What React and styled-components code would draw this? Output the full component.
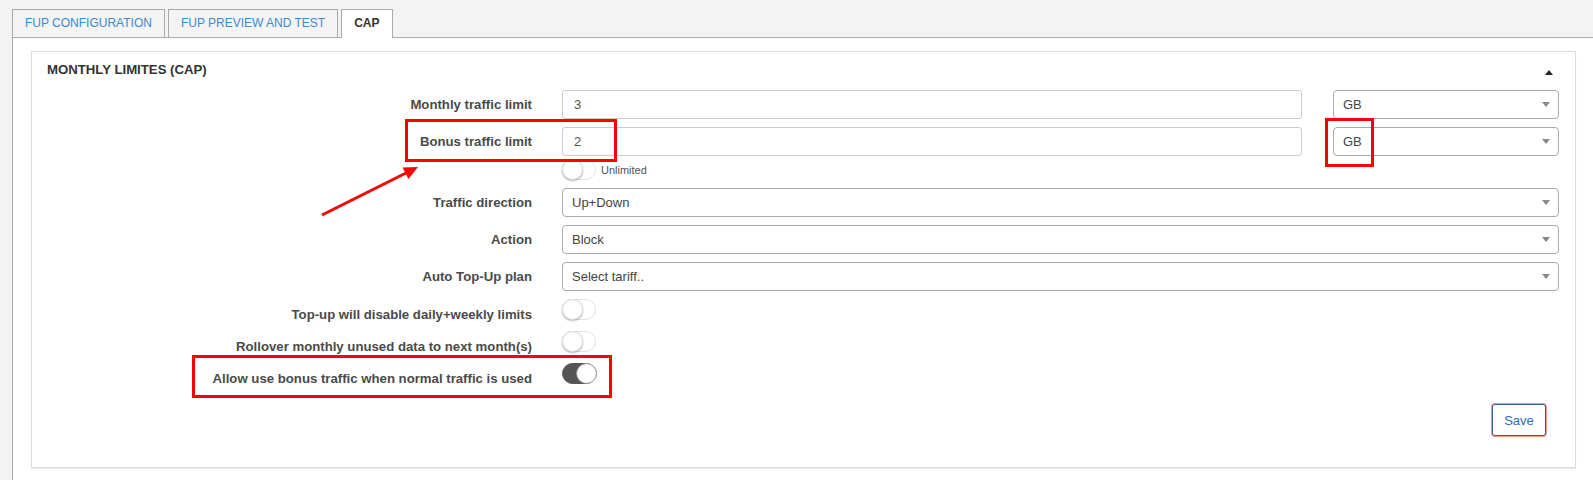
import React from 'react';
import styled, { createGlobalStyle } from 'styled-components';

const Global = createGlobalStyle`
  html, body { margin: 0; padding: 0; background: #f3f3f3; }
  body { font-family: "Liberation Sans", Arial, sans-serif; }
  * { box-sizing: border-box; }
`;

const Page = styled.div`
  position: relative;
  width: 1593px;
  height: 480px;
  overflow: hidden;
  background: #f3f3f3;
`;

const TabBar = styled.div`
  display: flex;
  align-items: flex-end;
  gap: 3px;
  padding: 9px 0 0 12px;
`;

const Tab = styled.div`
  position: relative;
  z-index: 1;
  height: ${p => (p.$active ? '29px' : '28px')};
  margin-bottom: ${p => (p.$active ? '-1px' : '0')};
  padding: 0 12px;
  border: 1px solid #aaa;
  border-bottom: none;
  background: ${p => (p.$active ? '#fff' : '#f4f4f4')};
  color: ${p => (p.$active ? '#333' : '#3b8ad0')};
  font-weight: ${p => (p.$active ? 'bold' : 'normal')};
  font-size: 12px;
  line-height: 27px;
  white-space: nowrap;
`;

const Panel = styled.div`
  margin-left: 12px;
  border-top: 1px solid #aaa;
  border-left: 1px solid #aaa;
  background: #fff;
  padding: 13px 17px 12px 18px;
`;

const Card = styled.div`
  border: 1px solid #ddd;
  box-shadow: 0 1px 1px rgba(0, 0, 0, 0.08);
  background: #fff;
  padding-bottom: 31px;
`;

const CardHeader = styled.div`
  display: flex;
  justify-content: space-between;
  align-items: center;
  padding: 8px 22px 0 15px;
  height: 28px;
`;

const CardTitle = styled.div`
  font-size: 13.2px;
  font-weight: bold;
  color: #333;
  line-height: 20px;
`;

const CollapseCaret = styled.span`
  width: 0;
  height: 0;
  border-left: 4px solid transparent;
  border-right: 4px solid transparent;
  border-bottom: 5px solid #222;
  margin-top: 4px;
`;

const Form = styled.div`
  margin-top: 10px;
`;

const Row = styled.div`
  display: flex;
  gap: 30px;
  margin-bottom: ${p => p.$mb || '8px'};
  height: ${p => p.$h || 'auto'};
`;

const Label = styled.div`
  width: 500px;
  flex-shrink: 0;
  text-align: right;
  font-size: 13.2px;
  font-weight: bold;
  color: #4a4a4a;
  line-height: ${p => (p.$toggle ? '17px' : '29px')};
  padding-top: ${p => (p.$toggle ? '7px' : '0')};
  white-space: nowrap;
`;

const Field = styled.div`
  width: 997px;
  display: flex;
  flex-direction: column;
`;

const FieldLine = styled.div`
  display: flex;
  gap: 31px;
`;

const TextInput = styled.input`
  width: ${p => p.$w || '100%'};
  height: 29px;
  border: 1px solid #ccc;
  border-radius: 3px;
  padding: 0 11px;
  font-family: "Liberation Sans", Arial, sans-serif;
  font-size: 13px;
  color: #555;
  background: #fff;
  outline: none;
`;

const Select = styled.div`
  width: ${p => p.$w || '100%'};
  height: 29px;
  flex-shrink: 0;
  border: 1px solid #aaa;
  border-radius: 4px;
  padding: 0 8px 0 9px;
  display: flex;
  align-items: center;
  justify-content: space-between;
  font-size: 13px;
  color: #444;
  background: #fff;
`;

const SelectCaret = styled.span`
  width: 0;
  height: 0;
  border-left: 4px solid transparent;
  border-right: 4px solid transparent;
  border-top: 5px solid #888;
`;

const SubLine = styled.div`
  display: flex;
  align-items: center;
  gap: 5px;
  margin-top: 3px;
  height: 20px;
`;

const SmallText = styled.span`
  font-size: 11px;
  color: #555;
  margin-top: 1px;
`;

const Switch = styled.div`
  position: relative;
  width: 34px;
  height: 21px;
  border-radius: 11px;
  border: 1px solid ${p => (p.$on ? '#555' : '#e2e2e2')};
  background: ${p => (p.$on ? '#555' : '#fff')};
  flex-shrink: 0;
`;

const Knob = styled.span`
  position: absolute;
  top: -1px;
  left: ${p => (p.$on ? '13px' : '-1px')};
  width: 21px;
  height: 21px;
  border-radius: 50%;
  background: #fff;
  border: 1px solid ${p => (p.$on ? '#888' : '#ddd')};
  box-shadow: ${p => (p.$on ? 'none' : '0 1px 2px rgba(0,0,0,0.3)')};
`;

const Footer = styled.div`
  display: flex;
  justify-content: flex-end;
  padding-right: 29px;
  margin-top: 9px;
`;

const SaveButton = styled.button`
  width: 54px;
  height: 32px;
  border: 1px solid #4c5676;
  box-shadow: 0 0 0 1px #f29a92;
  border-radius: 3px;
  background: #fff;
  color: #2b6cb9;
  font-family: "Liberation Sans", Arial, sans-serif;
  font-size: 13px;
  padding: 0;
`;

const Annotations = styled.svg`
  position: absolute;
  left: 0;
  top: 0;
  pointer-events: none;
`;

const Toggle = ({ on }) => (
  <Switch $on={on}>
    <Knob $on={on} />
  </Switch>
);

export default function App() {
  return (
    <Page>
      <Global />
      <TabBar>
        <Tab>FUP CONFIGURATION</Tab>
        <Tab>FUP PREVIEW AND TEST</Tab>
        <Tab $active>CAP</Tab>
      </TabBar>
      <Panel>
        <Card>
          <CardHeader>
            <CardTitle>MONTHLY LIMITES (CAP)</CardTitle>
            <CollapseCaret />
          </CardHeader>
          <Form>
            <Row>
              <Label>Monthly traffic limit</Label>
              <Field>
                <FieldLine>
                  <TextInput $w="740px" defaultValue="3" readOnly />
                  <Select $w="226px">GB<SelectCaret /></Select>
                </FieldLine>
              </Field>
            </Row>
            <Row $mb="9px">
              <Label>Bonus traffic limit</Label>
              <Field>
                <FieldLine>
                  <TextInput $w="740px" defaultValue="2" readOnly />
                  <Select $w="226px">GB<SelectCaret /></Select>
                </FieldLine>
                <SubLine>
                  <Toggle on={false} />
                  <SmallText>Unlimited</SmallText>
                </SubLine>
              </Field>
            </Row>
            <Row>
              <Label>Traffic direction</Label>
              <Field>
                <Select>Up+Down<SelectCaret /></Select>
              </Field>
            </Row>
            <Row>
              <Label>Action</Label>
              <Field>
                <Select>Block<SelectCaret /></Select>
              </Field>
            </Row>
            <Row>
              <Label>Auto Top-Up plan</Label>
              <Field>
                <Select>Select tariff..<SelectCaret /></Select>
              </Field>
            </Row>
            <Row $mb="0" $h="32px">
              <Label $toggle>Top-up will disable daily+weekly limits</Label>
              <Field><Toggle on={false} /></Field>
            </Row>
            <Row $mb="0" $h="32px">
              <Label $toggle>Rollover monthly unused data to next month(s)</Label>
              <Field><Toggle on={false} /></Field>
            </Row>
            <Row $mb="0" $h="32px">
              <Label $toggle>Allow use bonus traffic when normal traffic is used</Label>
              <Field><Toggle on /></Field>
            </Row>
          </Form>
          <Footer>
            <SaveButton>Save</SaveButton>
          </Footer>
        </Card>
      </Panel>
      <Annotations width="1593" height="480" viewBox="0 0 1593 480">
        <g fill="none" stroke="#ff0000" strokeWidth="3">
          <rect x="406.5" y="120.5" width="209" height="40" />
          <rect x="1326.5" y="119.5" width="46" height="46" />
          <rect x="193.5" y="356.5" width="417" height="40" />
          <line x1="322" y1="215" x2="408" y2="172" />
        </g>
        <polygon points="418,167 402.5,167.5 408.5,179" fill="#ff0000" />
      </Annotations>
    </Page>
  );
}
